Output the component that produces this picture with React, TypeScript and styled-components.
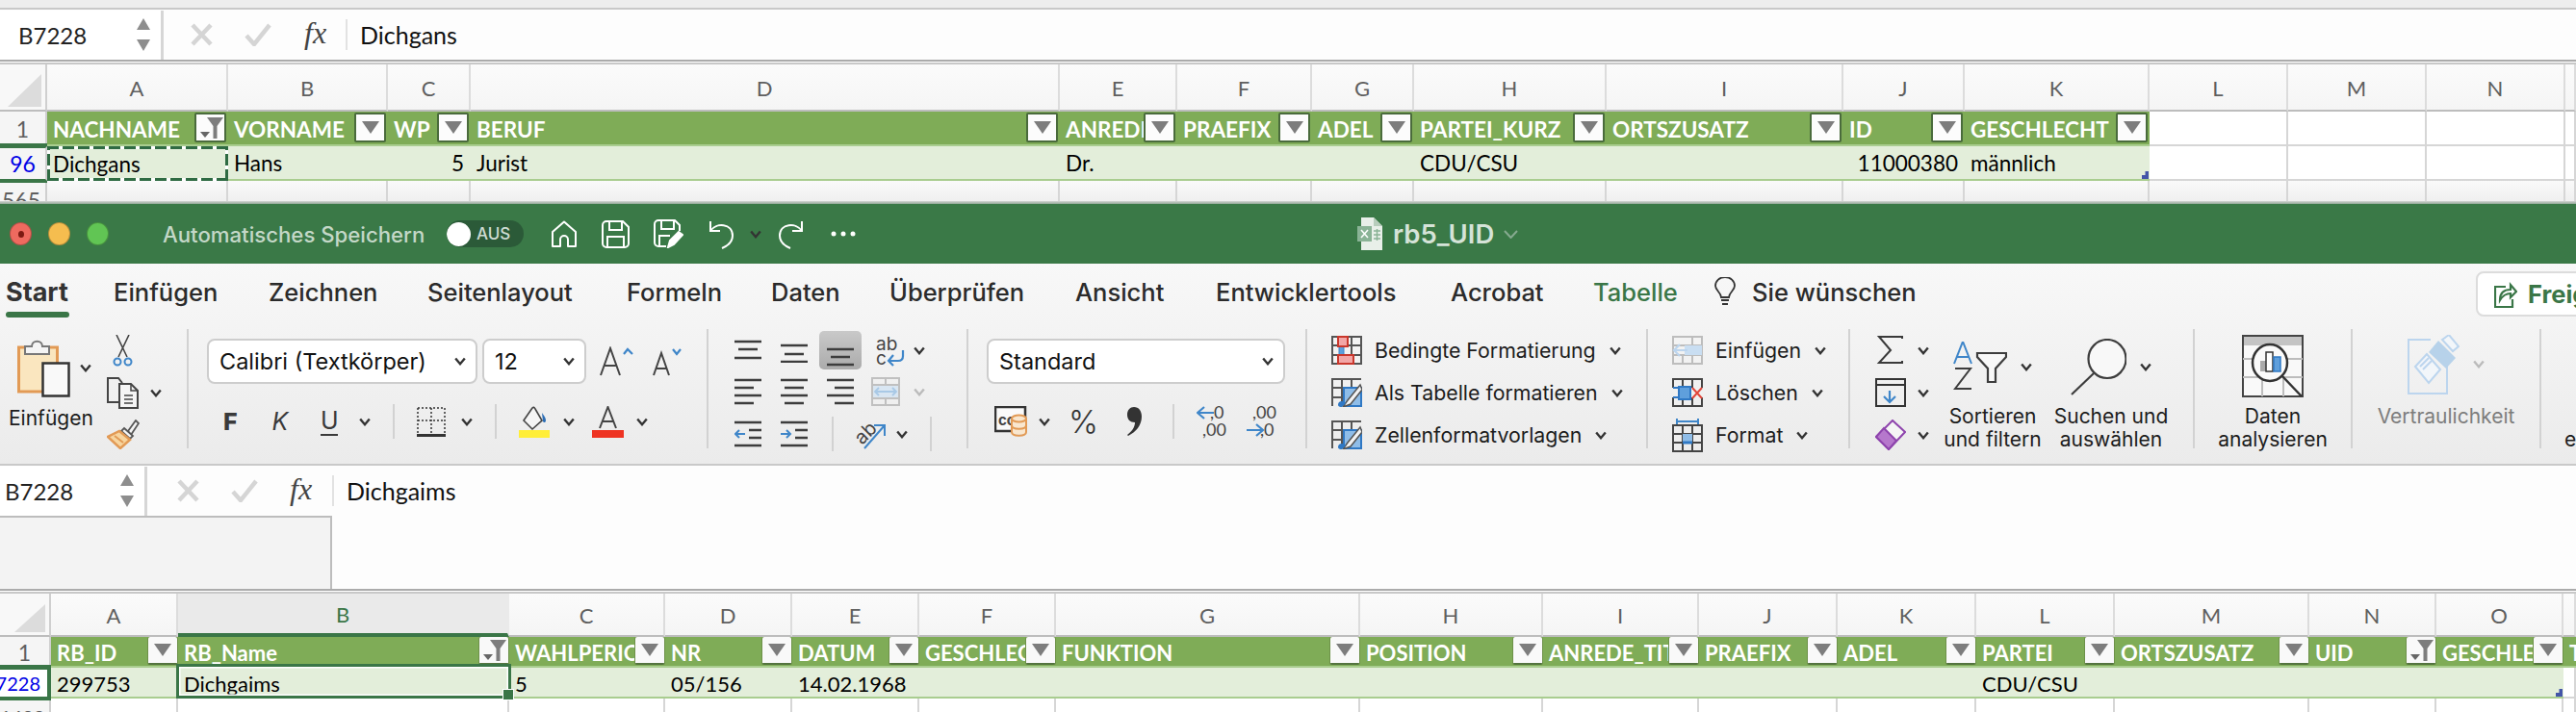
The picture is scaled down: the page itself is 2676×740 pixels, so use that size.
import React from "react";
import styled, { createGlobalStyle } from "styled-components";

const CELL_FONT = `Lato, "Liberation Sans", sans-serif`;
const UI_FONT = `Inter, "Liberation Sans", sans-serif`;
const DARK = "#3a7647";

const Global = createGlobalStyle`
  html, body { margin: 0; padding: 0; background: #fff; }
  #root { width: 2676px; height: 740px; overflow: hidden; }
`;

const Page = styled.div`
  width: 2676px;
  height: 740px;
  overflow: hidden;
  display: flex;
  flex-direction: column;
  font-family: ${UI_FONT};
`;

const TopStrip = styled.div`
  height: 8px;
  flex: none;
  background: #ededed;
  border-bottom: 2px solid #c8c8c8;
`;

/* formula bar */
const FormulaBar = styled.div<{ $h: number }>`
  height: ${(p) => p.$h}px;
  flex: none;
  display: flex;
  background: #fdfdfd;
  box-sizing: border-box;
`;
const FormulaLeft = styled.div<{ $w: number }>`
  width: ${(p) => p.$w}px;
  flex: none;
  display: flex;
  flex-direction: column;
`;
const FormulaTools = styled.div`
  height: 52px;
  flex: none;
  display: flex;
  align-items: center;
`;
const NameBox = styled.div<{ $w: number; $pl: number }>`
  width: ${(p) => p.$w}px;
  height: 51px;
  flex: none;
  box-sizing: border-box;
  padding-left: ${(p) => p.$pl}px;
  padding-right: 10px;
  background: #fff;
  border-right: 3px solid #d6d6d6;
  display: flex;
  align-items: center;
  justify-content: space-between;
  font: 400 24px ${CELL_FONT};
  color: #222;
`;
const FormulaTool = styled.span<{ $ml: number }>`
  margin-left: ${(p) => p.$ml}px;
  display: inline-flex;
  flex: none;
`;
const FxText = styled.span<{ $ml: number }>`
  margin-left: ${(p) => p.$ml}px;
  font: italic 400 32px "Liberation Serif", serif;
  color: #444;
  width: 30px;
  flex: none;
  margin-top: -4px;
`;
const FormulaFill = styled.div`
  flex: 1;
  background: #f3f3f3;
  border-top: 2px solid #bdbdbd;
  border-right: 2px solid #bdbdbd;
`;
const FormulaInput = styled.div<{ $h: number }>`
  flex: 1;
  height: ${(p) => p.$h}px;
  display: flex;
  align-items: center;
  padding-left: 15px;
  font: 400 25px ${CELL_FONT};
  color: #111;
  position: relative;
  &::before {
    content: "";
    position: absolute;
    left: 0;
    top: 10px;
    bottom: 10px;
    width: 2px;
    background: #e2e2e2;
  }
`;
const SplitLine = styled.div`
  height: 5px;
  flex: none;
  background: #fff;
  border-top: 2px solid #ababab;
  border-bottom: 2px solid #c8c8c8;
  box-sizing: border-box;
`;

/* sheet */
const GridRow = styled.div<{ $cols: string; $h: number }>`
  display: grid;
  grid-template-columns: ${(p) => p.$cols};
  height: ${(p) => p.$h}px;
  flex: none;
  font-family: ${CELL_FONT};
`;
const ColCell = styled.div<{ $sel?: boolean }>`
  box-sizing: border-box;
  display: flex;
  align-items: center;
  justify-content: center;
  padding-top: 2px;
  font-size: 22px;
  color: ${(p) => (p.$sel ? DARK : "#5f5f5f")};
  background: ${(p) => (p.$sel ? "#eaeaea" : "linear-gradient(#fbfbfb,#f5f5f5)")};
  border-right: 2px solid ${(p) => (p.$sel ? "#eaeaea" : "#dcdcdc")};
  border-bottom: ${(p) => (p.$sel ? `4px solid ${DARK}` : "2px solid #bdbdbd")};
`;
const CornerCell = styled.div`
  box-sizing: border-box;
  display: flex;
  align-items: flex-end;
  justify-content: flex-end;
  padding: 0 4px 3px 0;
  background: #f8f8f8;
  border-right: 2px solid #cfcfcf;
  border-bottom: 2px solid #bdbdbd;
`;
const RowHead = styled.div<{ $mark?: "plain" | "boxed" }>`
  box-sizing: border-box;
  display: flex;
  align-items: center;
  justify-content: ${(p) => (p.$mark === "boxed" ? "flex-end" : "center")};
  padding-right: ${(p) => (p.$mark === "boxed" ? 7 : 0)}px;
  overflow: hidden;
  position: relative;
  z-index: 2;
  font-size: ${(p) => (p.$mark === "boxed" ? 20 : 23)}px;
  color: ${(p) => (p.$mark ? "#0000e6" : "#5f5f5f")};
  background: ${(p) => (p.$mark === "boxed" ? "#fff" : "#f5f5f5")};
  border-right: ${(p) => (p.$mark === "boxed" ? `4px solid ${DARK}` : "2px solid #cfcfcf")};
  box-shadow: ${(p) => (p.$mark ? `0 -3px 0 ${DARK}, 0 2px 0 ${DARK}` : "none")};
  border-top: ${(p) => (p.$mark ? `2px solid ${DARK}` : "0")};
  border-bottom: ${(p) => (p.$mark ? `2px solid ${DARK}` : "0")};
`;
const HeadCell = styled.div<{ $size: number }>`
  box-sizing: border-box;
  position: relative;
  display: flex;
  align-items: center;
  padding: 2px 0 0 6px;
  overflow: hidden;
  white-space: nowrap;
  background: #7fac57;
  border-bottom: 2px solid #a9cd8f;
  color: #fff;
  font-size: ${(p) => p.$size}px;
  font-weight: 700;
`;
const EmptyCell = styled.div`
  box-sizing: border-box;
  background: #fff;
  border-right: 2px solid #d6d6d6;
  border-bottom: 2px solid #d6d6d6;
`;
const DataCell = styled.div<{ $right?: boolean; $ants?: boolean; $size: number; $pt?: number }>`
  box-sizing: border-box;
  position: relative;
  display: flex;
  align-items: center;
  justify-content: ${(p) => (p.$right ? "flex-end" : "flex-start")};
  padding: ${(p) => p.$pt ?? 0}px ${(p) => (p.$right ? 7 : 0)}px 0 ${(p) => (p.$right ? 0 : 6)}px;
  background: #e3eeda;
  color: #000;
  font-size: ${(p) => p.$size}px;
  white-space: nowrap;
  border-bottom: 2px solid #a9cd8f;
  ${(p) =>
    p.$ants
      ? `
    border-bottom: 0;
    z-index: 3;
    background:
      repeating-linear-gradient(90deg, #2f6b43 0 12px, #fff 12px 16px) left top / 100% 3px no-repeat,
      repeating-linear-gradient(90deg, #2f6b43 0 12px, #fff 12px 16px) left bottom / 100% 3px no-repeat,
      repeating-linear-gradient(0deg, #2f6b43 0 12px, #fff 12px 16px) left top / 3px 100% no-repeat,
      repeating-linear-gradient(0deg, #2f6b43 0 12px, #fff 12px 16px) right top / 3px 100% no-repeat,
      #e3eeda;
  `
      : ""}
`;
const NextHead = styled.div<{ $pr: number; $pt: number; $size: number }>`
  box-sizing: border-box;
  overflow: hidden;
  text-align: right;
  padding: ${(p) => p.$pt}px ${(p) => p.$pr}px 0 0;
  font-size: ${(p) => p.$size}px;
  line-height: 24px;
  color: #5f5f5f;
  background: #f5f5f5;
  border-right: 2px solid #cfcfcf;
`;
const NextCell = styled.div<{ $shade?: boolean }>`
  box-sizing: border-box;
  background: ${(p) => (p.$shade ? "linear-gradient(#fafafa,#efefef)" : "#fff")};
  border-right: 2px solid #d6d6d6;
`;
const ShadowLine = styled.div`
  height: 3px;
  flex: none;
  background: linear-gradient(#d4d4d4, #8fa794);
`;
const FilterBtn = styled.div<{ $boxed?: boolean }>`
  position: absolute;
  top: ${(p) => (p.$boxed ? 1 : 0)}px;
  right: ${(p) => (p.$boxed ? 2 : 1)}px;
  width: ${(p) => (p.$boxed ? 33 : 30)}px;
  height: ${(p) => (p.$boxed ? 31 : 29)}px;
  box-sizing: border-box;
  display: flex;
  align-items: center;
  justify-content: center;
  background: ${(p) => (p.$boxed ? "#fcfcfc" : "#f9f9f9")};
  border: ${(p) => (p.$boxed ? "2px solid #4a6b3c" : "0")};
  border-bottom: ${(p) => (p.$boxed ? "2px solid #4a6b3c" : "2px solid #54743f")};
  border-radius: 2px;
  box-shadow: ${(p) => (p.$boxed ? "none" : "-1px 0 0 #6d9149, 1px 0 0 #6d9149")};
`;
const SelectionBox = styled.div`
  position: absolute;
  left: -2px;
  right: -2px;
  top: -4px;
  bottom: -2px;
  box-sizing: border-box;
  border: 3px solid ${DARK};
  box-shadow: inset 0 0 0 1.5px #fff;
  z-index: 4;
`;
const FillHandle = styled.div`
  position: absolute;
  right: -6px;
  bottom: -5px;
  width: 10px;
  height: 10px;
  background: ${DARK};
  border: 1px solid #fff;
`;
const TableCorner = styled.div`
  position: absolute;
  right: 1px;
  bottom: 0;
  width: 7px;
  height: 8px;
  background: #4455a8;
  clip-path: polygon(100% 0, 100% 100%, 0 100%, 0 50%, 50% 50%, 50% 0);
`;

/* title bar */
const TitleBar = styled.div`
  height: 62px;
  flex: none;
  display: flex;
  align-items: center;
  background: #3a7947;
`;
const Light = styled.span<{ $c: string; $ml: number }>`
  width: 23px;
  height: 24px;
  flex: none;
  box-sizing: border-box;
  border-radius: 50%;
  margin-left: ${(p) => p.$ml}px;
  background: ${(p) => p.$c};
  border: 1px solid rgba(0, 0, 0, 0.25);
  display: flex;
  align-items: center;
  justify-content: center;
`;
const LightDot = styled.span`
  width: 6px;
  height: 7px;
  border-radius: 50%;
  background: #7c1a12;
`;
const AutoSave = styled.span`
  margin-left: 56px;
  width: 274px;
  flex: none;
  white-space: nowrap;
  font-size: 22.2px;
  font-weight: 500;
  color: #c4d8c8;
`;
const Toggle = styled.span`
  margin-left: 21px;
  width: 80px;
  height: 28px;
  flex: none;
  box-sizing: border-box;
  border-radius: 14px;
  background: #2b5a38;
  display: flex;
  align-items: center;
  font-size: 17px;
  font-weight: 500;
  color: #cfdcd3;
  gap: 6px;
  overflow: hidden;
`;
const Knob = styled.span`
  width: 25px;
  height: 25px;
  border-radius: 50%;
  background: #fff;
  flex: none;
`;
const TitleIcon = styled.span<{ $ml: number; $w: number }>`
  margin-left: ${(p) => p.$ml}px;
  width: ${(p) => p.$w}px;
  flex: none;
  display: inline-flex;
`;
const DocName = styled.span`
  margin-left: 11px;
  width: 106px;
  flex: none;
  font-size: 27.500px;
  font-weight: 600;
  color: #d5e3d8;
  white-space: nowrap;
`;

/* ribbon */
const Ribbon = styled.div`
  height: 210px;
  flex: none;
  box-sizing: border-box;
  background: linear-gradient(#f8f8f8, #ebebeb);
  border-bottom: 2px solid #c9c9c9;
  display: flex;
  flex-direction: column;
`;
const TabRow = styled.div`
  height: 68px;
  flex: none;
  display: flex;
  align-items: flex-start;
  padding-left: 6px;
`;
const Tab = styled.div<{ $w: number; $on?: boolean; $ctx?: boolean }>`
  position: relative;
  width: ${(p) => p.$w}px;
  flex: none;
  height: 58px;
  display: flex;
  align-items: center;
  white-space: nowrap;
  font-size: ${(p) => (p.$on ? 27 : 25.5)}px;
  font-weight: ${(p) => (p.$on ? 700 : 500)};
  color: ${(p) => (p.$ctx ? DARK : p.$on ? "#333" : "#2b2b2b")};
  ${(p) =>
    p.$on
      ? `&::after{content:"";position:absolute;left:0;width:66px;top:50px;height:6px;border-radius:3px;background:${DARK};}`
      : ""}
`;
const ShareBtn = styled.div`
  margin-left: 582px;
  margin-top: 8px;
  width: 200px;
  height: 47px;
  flex: none;
  box-sizing: border-box;
  background: #fff;
  border: 2px solid #dcdcdc;
  border-radius: 8px;
  display: flex;
  align-items: center;
  padding-left: 17px;
  gap: 11px;
  font-size: 25.500px;
  font-weight: 700;
  color: ${DARK};
`;
const ShareGlyph = styled.span`
  width: 24px;
  flex: none;
  display: inline-flex;
`;
const GroupRow = styled.div`
  flex: 1;
  display: flex;
  align-items: flex-start;
`;
const Group = styled.div<{ $w: number; $pl?: number; $row?: boolean; $line?: boolean }>`
  width: ${(p) => p.$w}px;
  height: 124px;
  flex: none;
  box-sizing: border-box;
  padding-left: ${(p) => p.$pl ?? 0}px;
  border-right: ${(p) => (p.$line === false ? "0" : "2px solid #d2d2d2")};
  display: flex;
  flex-direction: ${(p) => (p.$row ? "row" : "column")};
  align-items: flex-start;
`;
const ToolRow = styled.div<{ $h: number; $mt?: number }>`
  height: ${(p) => p.$h}px;
  margin-top: ${(p) => p.$mt ?? 0}px;
  flex: none;
  display: flex;
  align-items: center;
`;
const Tool = styled.span<{ $ml?: number; $w: number }>`
  margin-left: ${(p) => p.$ml ?? 0}px;
  width: ${(p) => p.$w}px;
  flex: none;
  display: inline-flex;
  justify-content: center;
`;
const VSep = styled.span<{ $ml: number }>`
  margin-left: ${(p) => p.$ml}px;
  width: 2px;
  height: 36px;
  flex: none;
  background: #d2d2d2;
`;
const PressedBtn = styled.span<{ $ml: number }>`
  margin-left: ${(p) => p.$ml}px;
  width: 44px;
  height: 40px;
  flex: none;
  border-radius: 5px;
  background: linear-gradient(#c9c9c9, #ababab);
  display: flex;
  justify-content: center;
  align-items: flex-end;
  padding-bottom: 3px;
  box-sizing: border-box;
`;
const SelectBox = styled.div<{ $w: number; $ml?: number }>`
  width: ${(p) => p.$w}px;
  margin-left: ${(p) => p.$ml ?? 0}px;
  height: 47px;
  flex: none;
  box-sizing: border-box;
  background: #fff;
  border: 2px solid #cdcdcd;
  border-radius: 8px;
  display: flex;
  align-items: center;
  justify-content: space-between;
  padding: 0 10px 0 11px;
  font-size: 23.500px;
  color: #111;
  white-space: nowrap;
`;
const ClipCol = styled.div`
  width: 102px;
  flex: none;
  display: flex;
  flex-direction: column;
  padding-left: 9px;
  box-sizing: border-box;
`;
const ToolLabel = styled.div<{ $muted?: boolean }>`
  font-size: 21px;
  line-height: 24px;
  text-align: center;
  white-space: nowrap;
  color: ${(p) => (p.$muted ? "#7d7d7d" : "#1c1c1c")};
`;
const BtnGlyph = styled.span<{ $w: number; $ml: number; $italic?: boolean; $bold?: boolean; $under?: boolean }>`
  width: ${(p) => p.$w}px;
  margin-left: ${(p) => p.$ml}px;
  flex: none;
  text-align: center;
  font-size: 25px;
  color: #3a3a3a;
  font-weight: ${(p) => (p.$bold ? 800 : 400)};
  font-style: ${(p) => (p.$italic ? "italic" : "normal")};
  border-bottom: ${(p) => (p.$under ? "2px solid #3a3a3a" : "0")};
  line-height: 28px;
`;
const PercentGlyph = styled.span`
  margin-left: 19px;
  width: 30px;
  flex: none;
  text-align: center;
  font-size: 33px;
  font-weight: 300;
  color: #333;
`;
const ListRow = styled.div`
  height: 44px;
  flex: none;
  display: flex;
  align-items: center;
  white-space: nowrap;
`;
const ListText = styled.span`
  margin-left: 13px;
  font-size: 21.300px;
  color: #1c1c1c;
`;
const SmallCol = styled.div`
  width: 82px;
  flex: none;
  padding-left: 26px;
  box-sizing: border-box;
`;
const BigTool = styled.div<{ $w: number; $ml?: number }>`
  width: ${(p) => p.$w}px;
  margin-left: ${(p) => p.$ml ?? 0}px;
  height: 124px;
  flex: none;
  display: flex;
  flex-direction: column;
  align-items: center;
`;
const BigIconArea = styled.div<{ $pt: number }>`
  height: 79px;
  box-sizing: border-box;
  padding-top: ${(p) => p.$pt}px;
  flex: none;
  display: flex;
  align-items: flex-start;
  justify-content: center;
  gap: 14px;
`;
const ChevronWrap = styled.span<{ $mt: number }>`
  margin-top: ${(p) => p.$mt}px;
  display: inline-flex;
`;
const EdgeLabel = styled(ToolLabel)`
  padding: 103px 0 0 24px;
`;

/* icons */
const Chev = ({ ml = 0, muted }: { ml?: number; muted?: boolean }) => (
  <svg width={12} height={9} viewBox="0 0 12 9" style={{ marginLeft: ml, flex: "none" }}>
    <path d="M1.2 1.5 6 7.2 10.8 1.5" fill="none" stroke={muted ? "#bbb" : "#333"} strokeWidth={2.4} />
  </svg>
);
const Spinner = () => (
  <svg width={16} height={36} viewBox="0 0 16 36">
    <path d="M8 1 15 13H1Z M1 23H15L8 35Z" fill="#8e8e8e" />
  </svg>
);
const CrossIcon = () => (
  <svg width={23} height={24} viewBox="0 0 23 24">
    <path d="M2 2 21 22M21 2 2 22" stroke="#d5d5d5" strokeWidth={4.5} />
  </svg>
);
const CheckIcon = () => (
  <svg width={28} height={24} viewBox="0 0 28 24">
    <path d="M2 13 10 22 26 2" fill="none" stroke="#d5d5d5" strokeWidth={4.5} />
  </svg>
);
const FilterDown = () => (
  <svg width={18} height={13} viewBox="0 0 18 13">
    <path d="M0 0H18L9 13Z" fill="#7d7d7d" />
  </svg>
);
const FilterOn = () => (
  <svg width={26} height={26} viewBox="0 0 26 26">
    <path d="M9 2H26L19.5 11V24H15.500V11Z" fill="#7d7d7d" />
    <path d="M2 17H12L7 23Z" fill="#666" />
  </svg>
);
const Corner = ({ w, h }: { w: number; h: number }) => (
  <svg width={w} height={h} viewBox={`0 0 ${w} ${h}`}>
    <path d={`M0 ${h}L${w} 0V${h}Z`} fill="#dcdcdc" />
  </svg>
);
const HomeIcon = () => (
  <svg width={28} height={29} viewBox="0 0 28 29" fill="none" stroke="#fff" strokeWidth={2}>
    <path d="M2 27V12L14 1.500 26 12V27H18V20A4 4 0 0 0 10 20V27Z" strokeLinejoin="round" />
  </svg>
);
const SaveIcon = () => (
  <svg width={29} height={29} viewBox="0 0 29 29" fill="none" stroke="#fff" strokeWidth={2}>
    <path d="M5 1H22L28 7V24A4 4 0 0 1 24 28H5A4 4 0 0 1 1 24V5A4 4 0 0 1 5 1Z" />
    <path d="M8 1V10H21V1M6 28V17H23V28" />
  </svg>
);
const SaveEditIcon = () => (
  <svg width={31} height={30} viewBox="0 0 31 30" fill="none" stroke="#fff" strokeWidth={2}>
    <path d="M13 28H5A4 4 0 0 1 1 24V5A4 4 0 0 1 5 1H22L27 6V12" />
    <path d="M8 1V10H21V1M6 28V17H17" />
    <path d="M15 29 17 22 26 13 30 16 21 26Z" fill="#fff" />
  </svg>
);
const UndoIcon = ({ flip }: { flip?: boolean }) => (
  <svg width={27} height={31} viewBox="0 0 27 31" fill="none" stroke="#fff" strokeWidth={2}
    style={{ transform: flip ? "scaleX(-1)" : undefined }}>
    <path d="M2 2V12H12M2 12C8 3 25 4 25 17 25 23 21 27 14 30" />
  </svg>
);
const DotsIcon = () => (
  <svg width={26} height={6} viewBox="0 0 26 6" fill="#fff">
    <circle cx={3} cy={3} r={2.500} /><circle cx={13} cy={3} r={2.500} /><circle cx={23} cy={3} r={2.500} />
  </svg>
);
const DocIcon = () => (
  <svg width={26} height={34} viewBox="0 0 26 34">
    <path d="M4 0H17L26 9V34H4Z" fill="#e8efe9" />
    <path d="M17 0V9H26Z" fill="#b7cdbc" />
    <rect x={0} y={9} width={15} height={16} fill="#8ab396" />
    <path d="M4 13 11 21M11 13 4 21" stroke="#fff" strokeWidth={1.500} />
    <path d="M17 14H24M17 18H24M17 22H24M20.500 12V24" stroke="#8ab396" strokeWidth={1.500} />
  </svg>
);
const TitleChev = () => (
  <svg width={15} height={9} viewBox="0 0 15 9">
    <path d="M1 1 7.500 8 14 1" fill="none" stroke="#86aa90" strokeWidth={2} />
  </svg>
);
const BulbIcon = () => (
  <svg width={24} height={30} viewBox="0 0 24 30" fill="none" stroke="#333" strokeWidth={1.800}>
    <path d="M8 21C8 16 2 14 2 9A10 9 0 0 1 22 9C22 14 16 16 16 21Z" />
    <path d="M8 24H16M9 28H15" strokeWidth={2} />
  </svg>
);
const ShareIcon = () => (
  <svg width={24} height={30} viewBox="0 0 24 30" fill="none" stroke={DARK} strokeWidth={2.200}>
    <path d="M12 7H1V28H19V20" />
    <path d="M6 21C6 13 10 10 17 10V5L23 12 17 18V14C12 14 9 16 6 21Z" />
  </svg>
);
const PasteIcon = () => (
  <svg width={55} height={61} viewBox="0 0 55 61">
    <rect x={1.500} y={9} width={40} height={46} fill="#fae6bf" stroke="#e29a55" strokeWidth={3} />
    <path d="M8 16V8H15C15 1 26 1 26 8H33V16Z" fill="#f4f4f4" stroke="#777" strokeWidth={2} />
    <rect x={26.500} y={25.500} width={27} height={34} fill="#f9f9f9" stroke="#333" strokeWidth={2.500} />
  </svg>
);
const ScissorsIcon = () => (
  <svg width={21} height={33} viewBox="0 0 21 33" fill="none">
    <path d="M4 0 15 23M17 0 6 23" stroke="#444" strokeWidth={1.600} />
    <circle cx={5} cy={28} r={3.500} stroke="#3f86c9" strokeWidth={2} />
    <circle cx={16} cy={28} r={3.500} stroke="#3f86c9" strokeWidth={2} />
  </svg>
);
const CopyIcon = () => (
  <svg width={33} height={33} viewBox="0 0 33 33" fill="none" stroke="#444" strokeWidth={2}>
    <path d="M12 26H1V1H12L16 6" />
    <path d="M13 7H25L32 14V32H13Z" fill="#f5f5f5" />
    <path d="M25 7V14H32M18 19H27M18 23H27M18 27H27" strokeWidth={1.500} />
  </svg>
);
const BrushIcon = () => (
  <svg width={34} height={31} viewBox="0 0 34 31">
    <path d="M22 12 30 1 33 4 25 16Z" fill="#f5f5f5" stroke="#555" strokeWidth={1.800} />
    <path d="M18 9 27 17 24 20 15 12Z" fill="#f5f5f5" stroke="#555" strokeWidth={1.800} />
    <path d="M13 12 24 21 14 30 1 18Z" fill="#f7d59f" stroke="#e29a55" strokeWidth={2.500} />
    <path d="M8 17 17 24" stroke="#e29a55" strokeWidth={2} />
  </svg>
);
const GrowA = ({ down }: { down?: boolean }) => (
  <svg width={down ? 30 : 37} height={32} viewBox={down ? "0 0 30 32" : "0 0 37 32"} fill="none">
    {down ? (
      <>
        <path d="M1 30 9 7 17 30M4 23H14" stroke="#444" strokeWidth={2} />
        <path d="M21 3 25 8 29 3" stroke="#3f86c9" strokeWidth={2.200} />
      </>
    ) : (
      <>
        <path d="M1 30 11 2 21 30M5 20H17" stroke="#444" strokeWidth={2} />
        <path d="M25 8 29 3 34 8" stroke="#3f86c9" strokeWidth={2.200} />
      </>
    )}
  </svg>
);
const BordersIcon = () => (
  <svg width={30} height={31} viewBox="0 0 30 31" fill="none" stroke="#333">
    <path d="M1 1H29V27M1 1V27M15 1V27M1 14H29" strokeWidth={1.500} strokeDasharray="2 2" />
    <path d="M0 29.500H30" strokeWidth={3} />
  </svg>
);
const FillIcon = () => (
  <svg width={32} height={33} viewBox="0 0 32 33">
    <path d="M14 2 5 15 14 24 24 15 17 3C16 1 15 1 14 2Z" fill="#f5f5f5" stroke="#444" strokeWidth={1.600} />
    <path d="M24 7C27 11 28 13 28 15 28 17 26 18 25 16Z" fill="#2b6db5" />
    <rect x={0} y={25} width={32} height={8} fill="#ffee38" />
  </svg>
);
const FontColorIcon = () => (
  <svg width={33} height={33} viewBox="0 0 33 33" fill="none">
    <path d="M8 23 16.500 1 25 23M11 16H22" stroke="#444" strokeWidth={2} />
    <rect x={0} y={25} width={33} height={8} fill="#ee3322" />
  </svg>
);
const Lines = ({ lines, w = 28, h = 26 }: { lines: [number, number, number][]; w?: number; h?: number }) => (
  <svg width={w} height={h} viewBox={`0 0 ${w} ${h}`} fill="none" stroke="#3d3d3d" strokeWidth={2.500}>
    {lines.map(([y, a, b], i) => (
      <path key={i} d={`M${a} ${y}H${b}`} />
    ))}
  </svg>
);
const IndentIcon = ({ dir }: { dir: "out" | "in" }) => (
  <svg width={28} height={28} viewBox="0 0 28 28" fill="none" stroke="#3d3d3d" strokeWidth={2.500}>
    <path d="M0 2H28M15 10H28M15 18H28M0 26H28" />
    <path d={dir === "out" ? "M11 14H1M5 10 1 14 5 18" : "M0 14H10M6 10 10 14 6 18"} stroke="#3f86c9" strokeWidth={2} />
  </svg>
);
const WrapIcon = () => (
  <svg width={30} height={33} viewBox="0 0 30 33" fill="none">
    <text x={0} y={16} fontFamily="Inter" fontSize={19} fill="#444">ab</text>
    <text x={0} y={31} fontFamily="Inter" fontSize={19} fill="#444">c</text>
    <path d="M28 16V22C28 26 26 27 23 27H13M18 21 13 27 18 32" stroke="#3f86c9" strokeWidth={2.200} />
  </svg>
);
const MergeIcon = () => (
  <svg width={30} height={30} viewBox="0 0 30 30" fill="none">
    <path d="M1 1H29V29H1ZM1 8H29M1 22H29M15 1V8M15 22V29" stroke="#c0c0c0" strokeWidth={2} />
    <rect x={2} y={9} width={26} height={12} fill="#d9e6f2" />
    <path d="M4 15H26M8 11 4 15 8 19M22 11 26 15 22 19" stroke="#a9c9e6" strokeWidth={1.800} />
  </svg>
);
const OrientIcon = () => (
  <svg width={34} height={32} viewBox="0 0 34 32" fill="none">
    <text x={2} y={24} fontFamily="Inter" fontSize={20} fill="#444" transform="rotate(-45 10 18)">ab</text>
    <path d="M11 31 32 7M21 7H32V18" stroke="#3f86c9" strokeWidth={2} />
  </svg>
);
const CurrencyIcon = () => (
  <svg width={34} height={32} viewBox="0 0 34 32" fill="none">
    <path d="M1 1H32V26H1Z" stroke="#333" strokeWidth={2.500} fill="#fafafa" />
    <text x={4} y={20} fontFamily="Inter" fontSize={15} fontWeight={700} fill="#444">cc</text>
    <path d="M18 12H33V29H18Z" fill="#f9e7cf" />
    <ellipse cx={25.500} cy={13} rx={7.500} ry={3.500} fill="#f9e7cf" stroke="#e29a55" strokeWidth={2} />
    <path d="M18 13V27C18 32 33 32 33 27V13M18 20C18 25 33 25 33 20" stroke="#e29a55" strokeWidth={2} />
  </svg>
);
const CommaIcon = () => (
  <svg width={15} height={32} viewBox="0 0 15 32">
    <path d="M7 1C12 1 15 5 15 11 15 20 9 27 1 31L0 30C5 26 8 22 8 17 3 17 0 14 0 9 0 4 3 1 7 1Z" fill="#333" />
  </svg>
);
const DecimalIcon = ({ inc }: { inc?: boolean }) => (
  <svg width={32} height={36} viewBox="0 0 32 36" fill="none">
    {inc ? (
      <>
        <text x={14} y={15} fontFamily="Lato" fontSize={18} fill="#444">,0</text>
        <text x={6} y={33} fontFamily="Lato" fontSize={18} fill="#444">,00</text>
        <path d="M18 9H1M8 3 1 9 8 15" stroke="#3f86c9" strokeWidth={2.200} />
      </>
    ) : (
      <>
        <text x={6} y={15} fontFamily="Lato" fontSize={18} fill="#444">,00</text>
        <text x={14} y={33} fontFamily="Lato" fontSize={18} fill="#444">,0</text>
        <path d="M0 27H17M10 21 17 27 10 33" stroke="#3f86c9" strokeWidth={2.200} />
      </>
    )}
  </svg>
);
const CondIcon = () => (
  <svg width={32} height={30} viewBox="0 0 32 30" fill="none">
    <path d="M1 1H31V29H1ZM1 10H31M1 20H31M11 1V29M21 1V29" stroke="#555" strokeWidth={2} />
    <rect x={8} y={10} width={5} height={10} fill="#5ba0dd" stroke="#3f86c9" />
    <rect x={7} y={1} width={10} height={10} fill="#f2a6a6" stroke="#c9372c" strokeWidth={2} />
    <rect x={7} y={20} width={16} height={9} fill="#f2a6a6" stroke="#c9372c" strokeWidth={2} />
  </svg>
);
const TableFmtIcon = () => (
  <svg width={32} height={30} viewBox="0 0 32 30" fill="none">
    <path d="M1 29V1H31M1 10H31M1 20H14M11 1V29M21 1V10" stroke="#555" strokeWidth={2} />
    <path d="M13 10H31V29H13Z" fill="#8fbde8" stroke="#2f78c4" strokeWidth={2} />
    <path d="M30 7 17 23 12 30 20 27 32 12Z" fill="#f3f3f3" stroke="#555" strokeWidth={1.500} />
    <path d="M11 30C7 30 6 28 8 25 10 23 14 24 15 26Z" fill="#2f78c4" />
  </svg>
);
const InsertCellIcon = () => (
  <svg width={32} height={30} viewBox="0 0 32 30" fill="none">
    <path d="M1 1H31V29H1ZM1 10H31M1 20H31M11 20V29M21 20V29M21 1V10" stroke="#bdbdbd" strokeWidth={2} />
    <rect x={13} y={10} width={18} height={10} fill="#c9def2" />
    <path d="M16 15H2M8 9 2 15 8 21" stroke="#bcd5ee" strokeWidth={2.200} />
  </svg>
);
const DeleteCellIcon = () => (
  <svg width={32} height={30} viewBox="0 0 32 30" fill="none">
    <path d="M1 10V1H31V10M1 20V29H31V20M11 1V10M21 1V10M11 20V29M21 20V29" stroke="#444" strokeWidth={2} />
    <rect x={7} y={9} width={12} height={13} fill="#5f9fdc" stroke="#2f78c4" strokeWidth={2} />
    <path d="M21 10 31 21M31 10 21 21" stroke="#e2463a" strokeWidth={2} />
    <path d="M1 10H7M1 20H7" stroke="#2f78c4" strokeWidth={2} />
  </svg>
);
const FormatCellIcon = () => (
  <svg width={32} height={36} viewBox="0 0 32 36" fill="none">
    <path d="M5 1V7M27 1V7M5 4H27" stroke="#3f86c9" strokeWidth={2} />
    <path d="M1 8H31V35H1ZM1 17H31M1 26H31M11 8V35M21 8V35" stroke="#444" strokeWidth={2} />
    <rect x={11} y={17} width={10} height={9} fill="#8fbde8" />
    <path d="M11 26H21" stroke="#2f78c4" strokeWidth={3} />
  </svg>
);
const SigmaIcon = () => (
  <svg width={32} height={30} viewBox="0 0 32 30" fill="none">
    <path d="M28 3V1H4L16 15 4 28H28V26" stroke="#3a3a3a" strokeWidth={2} />
  </svg>
);
const FillDownIcon = () => (
  <svg width={32} height={30} viewBox="0 0 32 30" fill="none">
    <path d="M1 1H31V29H1ZM1 7H31" stroke="#333" strokeWidth={2} />
    <path d="M15 13V25M9 19 15 25 21 19" stroke="#3f86c9" strokeWidth={2.200} />
  </svg>
);
const EraserIcon = () => (
  <svg width={32} height={32} viewBox="0 0 32 32" fill="none">
    <path d="M1 18 18 1 31 13 14 31Z" fill="#f5f5f5" stroke="#8e44ad" strokeWidth={2} />
    <path d="M1 18 9 9 22 22 14 31Z" fill="#b678cc" stroke="#8e44ad" strokeWidth={2} />
  </svg>
);
const SortIcon = () => (
  <svg width={56} height={50} viewBox="0 0 56 50" fill="none">
    <path d="M1 23 10 0 19 23M4 16H16" stroke="#3f86c9" strokeWidth={2} />
    <path d="M2 28H18L2 49H19" stroke="#3d3d3d" strokeWidth={2} />
    <path d="M25 12H55V16L44 28V42H36V28L25 16Z" fill="#f8f8f8" stroke="#3d3d3d" strokeWidth={2.200} />
  </svg>
);
const SearchIcon = () => (
  <svg width={58} height={59} viewBox="0 0 58 59" fill="none" stroke="#3d3d3d">
    <ellipse cx={38} cy={21} rx={19.500} ry={20} fill="#f8f8f8" strokeWidth={2.200} />
    <path d="M24 36 1 58" strokeWidth={2.200} />
  </svg>
);
const AnalyzeIcon = () => (
  <svg width={64} height={65} viewBox="0 0 64 65" fill="none">
    <rect x={1} y={1} width={62} height={63} fill="#f9f9f9" stroke="#444" strokeWidth={2} />
    <rect x={2} y={2} width={60} height={9} fill="#c4c4c4" />
    <path d="M1 25H63M1 44H63M21 44V64M43 44V64" stroke="#bdbdbd" strokeWidth={2} />
    <ellipse cx={29} cy={29} rx={18} ry={19} fill="#fafafa" stroke="#333" strokeWidth={2.500} />
    <rect x={19} y={27} width={8} height={11} fill="#aaa" />
    <rect x={25} y={18} width={7} height={20} fill="#fff" stroke="#333" strokeWidth={1.500} />
    <rect x={33} y={23} width={7} height={15} fill="#5f9fdc" stroke="#2f78c4" strokeWidth={1.500} />
    <path d="M42 43 62 64" stroke="#333" strokeWidth={2.500} />
  </svg>
);
const SensitivityIcon = () => (
  <svg width={54} height={62} viewBox="0 0 54 62" fill="none">
    <path d="M24 5H1V61H41V31" stroke="#bcd5ee" strokeWidth={2} />
    <path d="M8 33 20 20 34 36 22 50Z" stroke="#bcd5ee" strokeWidth={2} fill="#f2f6fa" />
    <path d="M13 33 22 24M16 36 25 27" stroke="#bcd5ee" strokeWidth={2} />
    <path d="M22 18 32 6 50 24 40 35Z" fill="#b7d2ea" />
    <path d="M36 5 43 0 53 12 47 17Z" fill="#f2f6fa" stroke="#bcd5ee" strokeWidth={2} />
  </svg>
);

/* data */
type Head = { t: string; on?: boolean };
const TOP_W = [49, 188, 166, 86, 612, 122, 140, 106, 200, 246, 126, 192, 144, 144, 144, 11];
const BOT_W = [53, 132, 344, 162, 132, 132, 142, 316, 190, 162, 144, 144, 144, 202, 132, 132, 13];
const toCols = (a: number[]) => a.map((w) => `${w}px`).join(" ");
const LETTERS = "ABCDEFGHIJKLMNOP".split("");

const TOP_HEAD: Head[] = [
  { t: "NACHNAME", on: true }, { t: "VORNAME" }, { t: "WP" }, { t: "BERUF" }, { t: "ANREDE" }, { t: "PRAEFIX" },
  { t: "ADEL" }, { t: "PARTEI_KURZ" }, { t: "ORTSZUSATZ" }, { t: "ID" }, { t: "GESCHLECHT" },
];
const BOT_HEAD: Head[] = [
  { t: "RB_ID" }, { t: "RB_Name", on: true }, { t: "WAHLPERIODE" }, { t: "NR" }, { t: "DATUM" }, { t: "GESCHLECHT" },
  { t: "FUNKTION" }, { t: "POSITION" }, { t: "ANREDE_TITEL" }, { t: "PRAEFIX" }, { t: "ADEL" }, { t: "PARTEI" },
  { t: "ORTSZUSATZ" }, { t: "UID", on: true }, { t: "GESCHLECHT" },
];
const TOP_DATA: Record<number, string> = { 0: "Dichgans", 1: "Hans", 2: "5", 3: "Jurist", 4: "Dr.", 7: "CDU/CSU", 9: "11000380", 10: "männlich" };
const BOT_DATA: Record<number, string> = { 0: "299753", 1: "Dichgaims", 2: "5", 3: "05/156", 4: "14.02.1968", 11: "CDU/CSU" };

const FormulaTop = ({ name, value, leftW, boxW, pl, x, check, fx, expanded }: {
  name: string; value: string; leftW: number; boxW: number; pl: number; x: number; check: number; fx: number; expanded?: boolean;
}) => (
  <FormulaBar $h={expanded ? 128 : 52}>
    <FormulaLeft $w={leftW}>
      <FormulaTools>
        <NameBox $w={boxW} $pl={pl}>
          <span>{name}</span>
          <Spinner />
        </NameBox>
        <FormulaTool $ml={x}><CrossIcon /></FormulaTool>
        <FormulaTool $ml={check}><CheckIcon /></FormulaTool>
        <FxText $ml={fx}>fx</FxText>
      </FormulaTools>
      {expanded && <FormulaFill />}
    </FormulaLeft>
    <FormulaInput $h={52}>{value}</FormulaInput>
  </FormulaBar>
);

const TopSheet = () => {
  const cols = toCols(TOP_W);
  return (
    <>
      <GridRow $cols={cols} $h={49}>
        <CornerCell><Corner w={35} h={34} /></CornerCell>
        {TOP_W.slice(1).map((_, i) => (
          <ColCell key={i}>{i < 14 ? LETTERS[i] : ""}</ColCell>
        ))}
      </GridRow>
      <GridRow $cols={cols} $h={36}>
        <RowHead>1</RowHead>
        {TOP_W.slice(1).map((_, i) =>
          TOP_HEAD[i] ? (
            <HeadCell key={i} $size={22.5}>
              {TOP_HEAD[i].t}
              <FilterBtn $boxed>{TOP_HEAD[i].on ? <FilterOn /> : <FilterDown />}</FilterBtn>
            </HeadCell>
          ) : (
            <EmptyCell key={i} />
          )
        )}
      </GridRow>
      <GridRow $cols={cols} $h={36}>
        <RowHead $mark="plain">96</RowHead>
        {TOP_W.slice(1).map((_, i) =>
          i < 11 ? (
            <DataCell key={i} $size={22.5} $right={i === 2 || i === 9} $ants={i === 0}>
              {TOP_DATA[i]}
              {i === 10 && <TableCorner />}
            </DataCell>
          ) : (
            <EmptyCell key={i} />
          )
        )}
      </GridRow>
      <GridRow $cols={cols} $h={21}>
        <NextHead $pr={5} $pt={8} $size={23}>565</NextHead>
        {TOP_W.slice(1).map((_, i) => <NextCell key={i} $shade />)}
      </GridRow>
      <ShadowLine />
    </>
  );
};

const BottomSheet = () => {
  const cols = toCols(BOT_W);
  return (
    <>
      <GridRow $cols={cols} $h={45}>
        <CornerCell><Corner w={32} h={29} /></CornerCell>
        {BOT_W.slice(1).map((_, i) => (
          <ColCell key={i} $sel={i === 1}>{i < 15 ? LETTERS[i] : ""}</ColCell>
        ))}
      </GridRow>
      <GridRow $cols={cols} $h={32}>
        <RowHead>1</RowHead>
        {BOT_W.slice(1).map((_, i) =>
          BOT_HEAD[i] ? (
            <HeadCell key={i} $size={22}>
              {BOT_HEAD[i].t}
              <FilterBtn>{BOT_HEAD[i].on ? <FilterOn /> : <FilterDown />}</FilterBtn>
            </HeadCell>
          ) : (
            <HeadCell key={i} $size={22}>T</HeadCell>
          )
        )}
      </GridRow>
      <GridRow $cols={cols} $h={32}>
        <RowHead $mark="boxed">7228</RowHead>
        {BOT_W.slice(1).map((_, i) =>
          i < 15 ? (
            <DataCell key={i} $size={22} $pt={2}>
              {BOT_DATA[i]}
              {i === 1 && <SelectionBox><FillHandle /></SelectionBox>}
              {i === 14 && <TableCorner />}
            </DataCell>
          ) : (
            <EmptyCell key={i} />
          )
        )}
      </GridRow>
      <GridRow $cols={cols} $h={14}>
        <NextHead $pr={7} $pt={7} $size={20}>1492</NextHead>
        {BOT_W.slice(1).map((_, i) => <NextCell key={i} />)}
      </GridRow>
    </>
  );
};

const TABS: [string, number, boolean?, boolean?][] = [
  ["Start", 112, true], ["Einfügen", 161], ["Zeichnen", 165], ["Seitenlayout", 207], ["Formeln", 150],
  ["Daten", 123], ["Überprüfen", 193], ["Ansicht", 146], ["Entwicklertools", 244], ["Acrobat", 148],
  ["Tabelle", 125, false, true],
];

const App = () => (
  <Page>
    <Global />
    <TopStrip />
    <FormulaTop name="B7228" value="Dichgans" leftW={359} boxW={170} pl={19} x={28} check={33} fx={34} />
    <SplitLine />
    <TopSheet />

    <TitleBar>
      <Light $c="#ee6a5f" $ml={10}><LightDot /></Light>
      <Light $c="#f5bd4f" $ml={17} />
      <Light $c="#61c554" $ml={17} />
      <AutoSave>Automatisches Speichern</AutoSave>
      <Toggle><Knob />AUS</Toggle>
      <TitleIcon $ml={28} $w={28}><HomeIcon /></TitleIcon>
      <TitleIcon $ml={25} $w={29}><SaveIcon /></TitleIcon>
      <TitleIcon $ml={25} $w={31}><SaveEditIcon /></TitleIcon>
      <TitleIcon $ml={26} $w={27}><UndoIcon /></TitleIcon>
      <TitleIcon $ml={16} $w={12}><Chev /></TitleIcon>
      <TitleIcon $ml={17} $w={27}><UndoIcon flip /></TitleIcon>
      <TitleIcon $ml={28} $w={26}><DotsIcon /></TitleIcon>
      <TitleIcon $ml={521} $w={26}><DocIcon /></TitleIcon>
      <DocName>rb5_UID</DocName>
      <TitleIcon $ml={9} $w={15}><TitleChev /></TitleIcon>
    </TitleBar>

    <Ribbon>
      <TabRow>
        {TABS.map(([t, w, on, ctx]) => (
          <Tab key={t} $w={w} $on={on} $ctx={ctx}>{t}</Tab>
        ))}
        <Tab $w={40}><BulbIcon /></Tab>
        <Tab $w={170}>Sie wünschen</Tab>
        <ShareBtn><ShareGlyph><ShareIcon /></ShareGlyph>Freigeben</ShareBtn>
      </TabRow>

      <GroupRow>
        <Group $w={196} $row>
          <ClipCol>
            <ToolRow $h={61} $mt={10}>
              <Tool $ml={9} $w={55}><PasteIcon /></Tool>
              <Chev ml={10} />
            </ToolRow>
            <ToolRow $h={24} $mt={10}>
              <ToolLabel>Einfügen</ToolLabel>
            </ToolRow>
          </ClipCol>
          <div>
            <ToolRow $h={33} $mt={6}>
              <Tool $ml={15} $w={21}><ScissorsIcon /></Tool>
            </ToolRow>
            <ToolRow $h={33} $mt={11}>
              <Tool $ml={9} $w={33}><CopyIcon /></Tool>
              <Chev ml={12} />
            </ToolRow>
            <ToolRow $h={31} $mt={11}>
              <Tool $ml={9} $w={34}><BrushIcon /></Tool>
            </ToolRow>
          </div>
        </Group>

        <Group $w={540} $pl={19}>
          <ToolRow $h={47} $mt={10}>
            <SelectBox $w={281}>Calibri (Textkörper)<Chev /></SelectBox>
            <SelectBox $w={108} $ml={5}>12<Chev /></SelectBox>
            <Tool $ml={14} $w={37}><GrowA /></Tool>
            <Tool $ml={18} $w={30}><GrowA down /></Tool>
          </ToolRow>
          <ToolRow $h={40} $mt={19}>
            <BtnGlyph $w={13} $ml={17} $bold>F</BtnGlyph>
            <BtnGlyph $w={18} $ml={37} $italic>K</BtnGlyph>
            <BtnGlyph $w={18} $ml={33} $under>U</BtnGlyph>
            <Chev ml={22} />
            <VSep $ml={23} />
            <Tool $ml={23} $w={30}><BordersIcon /></Tool>
            <Chev ml={16} />
            <VSep $ml={23} />
            <Tool $ml={23} $w={32}><FillIcon /></Tool>
            <Chev ml={14} />
            <Tool $ml={18} $w={33}><FontColorIcon /></Tool>
            <Chev ml={13} />
          </ToolRow>
        </Group>

        <Group $w={270} $pl={27}>
          <ToolRow $h={40} $mt={2}>
            <Tool $w={28}><Lines lines={[[4, 0, 28], [12, 4, 24], [21, 0, 28]]} /></Tool>
            <Tool $ml={20} $w={28}><Lines lines={[[8, 0, 28], [17, 4, 24], [25, 0, 28]]} /></Tool>
            <PressedBtn $ml={12}><Lines lines={[[6, 0, 28], [14, 4, 24], [22, 0, 28]]} h={24} /></PressedBtn>
            <Tool $ml={15} $w={30}><WrapIcon /></Tool>
            <Chev ml={9} />
          </ToolRow>
          <ToolRow $h={28} $mt={9}>
            <Tool $w={28}><Lines lines={[[2, 0, 28], [10, 0, 20], [18, 0, 28], [26, 0, 20]]} h={28} /></Tool>
            <Tool $ml={20} $w={28}><Lines lines={[[2, 0, 28], [10, 4, 24], [18, 0, 28], [26, 4, 24]]} h={28} /></Tool>
            <Tool $ml={20} $w={28}><Lines lines={[[2, 0, 28], [10, 8, 28], [18, 0, 28], [26, 8, 28]]} h={28} /></Tool>
            <Tool $ml={18} $w={30}><MergeIcon /></Tool>
            <Chev ml={14} muted />
          </ToolRow>
          <ToolRow $h={26} $mt={17}>
            <Tool $w={28}><IndentIcon dir="out" /></Tool>
            <Tool $ml={20} $w={28}><IndentIcon dir="in" /></Tool>
            <VSep $ml={25} />
            <Tool $ml={21} $w={34}><OrientIcon /></Tool>
            <Chev ml={10} />
            <VSep $ml={23} />
          </ToolRow>
        </Group>

        <Group $w={352} $pl={19}>
          <ToolRow $h={47} $mt={10}>
            <SelectBox $w={310}>Standard<Chev /></SelectBox>
          </ToolRow>
          <ToolRow $h={40} $mt={19}>
            <Tool $ml={8} $w={34}><CurrencyIcon /></Tool>
            <Chev ml={12} />
            <PercentGlyph>%</PercentGlyph>
            <Tool $ml={31} $w={15}><CommaIcon /></Tool>
            <VSep $ml={32} />
            <Tool $ml={23} $w={32}><DecimalIcon inc /></Tool>
            <Tool $ml={20} $w={32}><DecimalIcon /></Tool>
          </ToolRow>
        </Group>

        <Group $w={354} $pl={25}>
          <ListRow><CondIcon /><ListText>Bedingte Formatierung</ListText><Chev ml={14} /></ListRow>
          <ListRow><TableFmtIcon /><ListText>Als Tabelle formatieren</ListText><Chev ml={14} /></ListRow>
          <ListRow><TableFmtIcon /><ListText>Zellenformatvorlagen</ListText><Chev ml={14} /></ListRow>
        </Group>

        <Group $w={210} $pl={25}>
          <ListRow><InsertCellIcon /><ListText>Einfügen</ListText><Chev ml={14} /></ListRow>
          <ListRow><DeleteCellIcon /><ListText>Löschen</ListText><Chev ml={14} /></ListRow>
          <ListRow><FormatCellIcon /><ListText>Format</ListText><Chev ml={14} /></ListRow>
        </Group>

        <Group $w={358} $row>
          <SmallCol>
            <ListRow><SigmaIcon /><Chev ml={12} /></ListRow>
            <ListRow><FillDownIcon /><Chev ml={12} /></ListRow>
            <ListRow><EraserIcon /><Chev ml={12} /></ListRow>
          </SmallCol>
          <BigTool $w={110} $ml={11}>
            <BigIconArea $pt={13}>
              <SortIcon />
              <ChevronWrap $mt={22}><Chev /></ChevronWrap>
            </BigIconArea>
            <ToolLabel>Sortieren</ToolLabel>
            <ToolLabel>und filtern</ToolLabel>
          </BigTool>
          <BigTool $w={118} $ml={9}>
            <BigIconArea $pt={10}>
              <SearchIcon />
              <ChevronWrap $mt={25}><Chev /></ChevronWrap>
            </BigIconArea>
            <ToolLabel>Suchen und</ToolLabel>
            <ToolLabel>auswählen</ToolLabel>
          </BigTool>
        </Group>

        <Group $w={164} $row>
          <BigTool $w={162}>
            <BigIconArea $pt={6}><AnalyzeIcon /></BigIconArea>
            <ToolLabel>Daten</ToolLabel>
            <ToolLabel>analysieren</ToolLabel>
          </BigTool>
        </Group>

        <Group $w={196} $row>
          <BigTool $w={194}>
            <BigIconArea $pt={6}>
              <SensitivityIcon />
              <ChevronWrap $mt={26}><Chev muted /></ChevronWrap>
            </BigIconArea>
            <ToolLabel $muted>Vertraulichkeit</ToolLabel>
          </BigTool>
        </Group>

        <Group $w={36} $line={false}>
          <EdgeLabel>e</EdgeLabel>
        </Group>
      </GroupRow>
    </Ribbon>

    <FormulaTop name="B7228" value="Dichgaims" leftW={345} boxW={153} pl={5} x={31} check={33} fx={33} expanded />
    <SplitLine />
    <BottomSheet />
  </Page>
);

export default App;
